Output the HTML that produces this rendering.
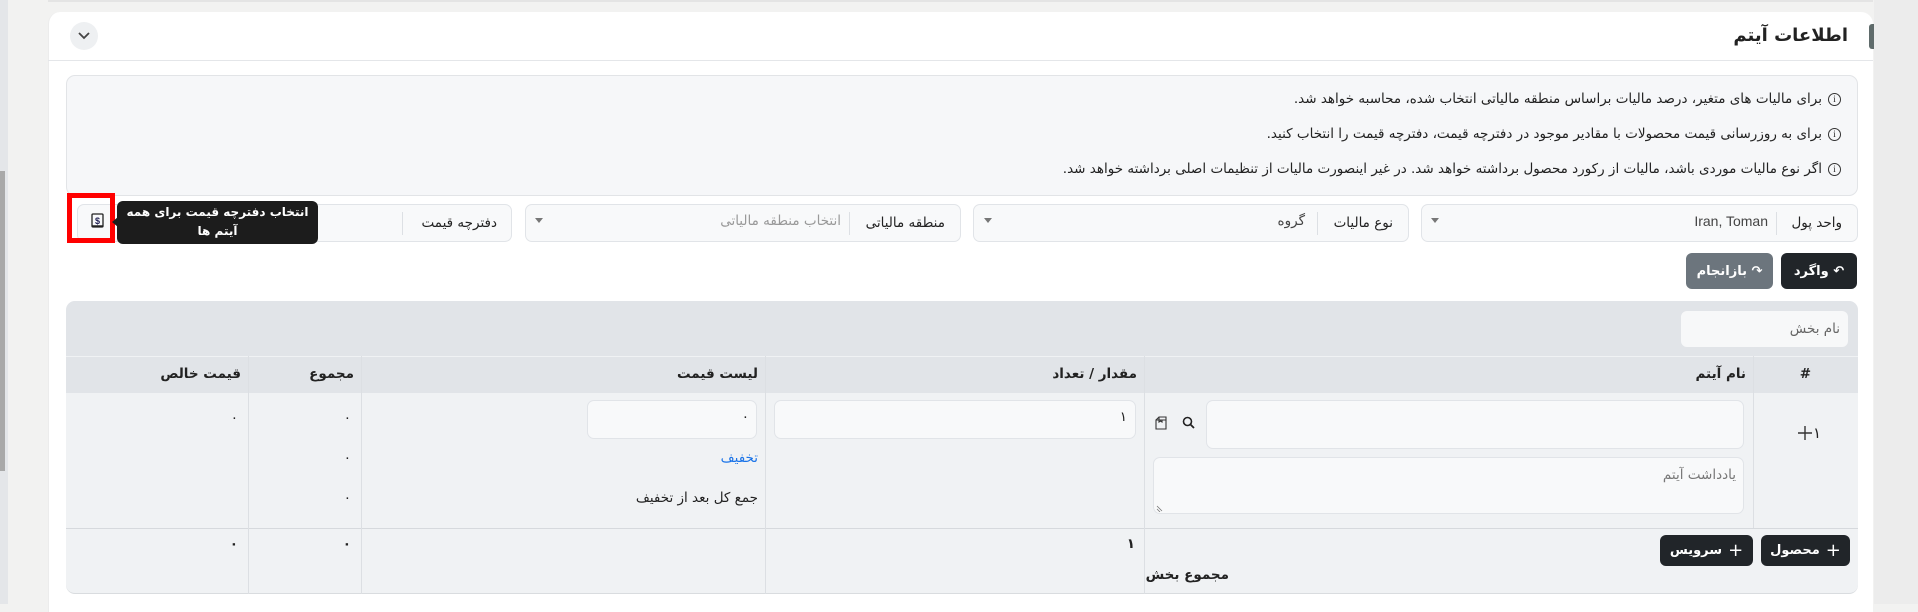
<!DOCTYPE html>
<html><head><meta charset="utf-8"><style>
*{box-sizing:border-box;margin:0;padding:0}
body{width:1918px;height:604px;background:#f2f2f1;font-family:"DejaVu Sans","Liberation Sans",sans-serif;font-size:13.5px;color:#222;position:relative;overflow:hidden}
.a{position:absolute}
.t{position:absolute;direction:rtl;white-space:nowrap}
.inp{position:absolute;background:#f8f9fa;border:1px solid #e1e4e8;border-radius:7px}
.caret{position:absolute;width:0;height:0;border-left:4px solid transparent;border-right:4px solid transparent;border-top:5px solid #777}
.div{position:absolute;width:1px;background:#dde0e4}
.btn{position:absolute;background:#212529;color:#fff;border-radius:6px;direction:rtl;font-weight:bold;font-size:13px;display:flex;align-items:center;justify-content:center;gap:6px}
.vl{position:absolute;width:1px;background:#dcdfe3}
.hl{position:absolute;height:1px;background:#d6d9dd}
.i{display:inline-block;width:13px;height:13px;border:1px solid #333;border-radius:50%;font-size:9px;line-height:11px;text-align:center;vertical-align:1px;margin-left:6px;font-family:"Liberation Serif",serif}
</style></head><body>
<div class="a" style="left:0;top:0;width:8px;height:604px;background:#e4e6e9"></div>
<div class="a" style="left:0;top:171px;width:5px;height:300px;background:#a9a9a9"></div>
<div class="a" style="left:48px;top:0;width:1825px;height:2px;background:#e4e4e4"></div>
<div class="a" style="left:1874px;top:0;width:44px;height:604px;background:#ececec"></div>
<div class="a" style="left:48px;top:12px;width:1825px;height:600px;background:#fff;border-radius:12px 12px 0 0;border-left:1px solid #ececec"></div>
<div class="a" style="left:1869px;top:24px;width:5px;height:25px;background:#5f6b6b;border-radius:3px 0 0 3px"></div>
<div class="t" style="right:70px;top:25px;font-size:18px;font-weight:bold;color:#222">اطلاعات آیتم</div>
<div class="a" style="left:70px;top:22px;width:28px;height:28px;border-radius:50%;background:#eef0f2"></div>
<svg class="a" style="left:77px;top:30px" width="14" height="12" viewBox="0 0 14 12"><path d="M2 3l5 5 5-5" fill="none" stroke="#444" stroke-width="1.8"/></svg>
<div class="a" style="left:48px;top:60px;width:1825px;height:1px;background:#e4e6e9"></div>
<div class="a" style="left:66px;top:75px;width:1792px;height:121px;background:#f6f7f9;border:1px solid #e2e4e7;border-radius:9px"></div>
<div class="t" style="right:77px;top:91px"><span class="i">i</span>برای مالیات های متغیر، درصد مالیات براساس منطقه مالیاتی انتخاب شده، محاسبه خواهد شد.</div>
<div class="t" style="right:77px;top:126px"><span class="i">i</span>برای به روزرسانی قیمت محصولات با مقادیر موجود در دفترچه قیمت، دفترچه قیمت را انتخاب کنید.</div>
<div class="t" style="right:77px;top:161px"><span class="i">i</span>اگر نوع مالیات موردی باشد، مالیات از رکورد محصول برداشته خواهد شد. در غیر اینصورت مالیات از تنظیمات اصلی برداشته خواهد شد.</div>
<div class="inp" style="left:1421px;top:204px;width:437px;height:38px"></div>
<div class="t" style="right:76px;top:215px">واحد پول</div>
<div class="div" style="left:1776px;top:212px;height:23px"></div>
<div class="t" style="right:150px;top:213px;font-family:'Liberation Sans';font-size:14px;color:#444">Iran, Toman</div>
<div class="caret" style="left:1431px;top:218px"></div>
<div class="inp" style="left:973px;top:204px;width:436px;height:38px"></div>
<div class="t" style="right:525px;top:215px">نوع مالیات</div>
<div class="div" style="left:1317px;top:212px;height:23px"></div>
<div class="t" style="right:613px;top:213px;color:#444">گروه</div>
<div class="caret" style="left:984px;top:218px"></div>
<div class="inp" style="left:525px;top:204px;width:436px;height:38px"></div>
<div class="t" style="right:973px;top:215px">منطقه مالیاتی</div>
<div class="div" style="left:849px;top:212px;height:23px"></div>
<div class="t" style="right:1077px;top:213px;color:#999">انتخاب منطقه مالیاتی</div>
<div class="caret" style="left:535px;top:218px"></div>
<div class="inp" style="left:77px;top:204px;width:435px;height:38px"></div>
<div class="t" style="right:1421px;top:215px">دفترچه قیمت</div>
<div class="div" style="left:402px;top:212px;height:23px"></div>
<div class="a" style="left:67px;top:193px;width:48px;height:50px;border:5px solid #f00"></div>
<svg class="a" style="left:91px;top:213px" width="13" height="16" viewBox="0 0 13 16"><rect x="1" y="1" width="11" height="13" rx="1" fill="none" stroke="#222" stroke-width="1.3"/><line x1="1" y1="13" x2="12" y2="13" stroke="#222" stroke-width="1.5"/><text x="6.5" y="11" font-size="9" text-anchor="middle" fill="#225" font-family="Liberation Sans" font-weight="bold">$</text></svg>
<div class="a" style="left:117px;top:201px;width:201px;height:43px;background:#1c1c1c;border-radius:6px"></div>
<div class="a" style="left:112px;top:217px;width:0;height:0;border-top:5px solid transparent;border-bottom:5px solid transparent;border-right:6px solid #1c1c1c"></div>
<div class="a" style="left:117px;top:203px;width:201px;direction:rtl;text-align:center;color:#fff;font-size:12px;font-weight:bold;line-height:19px">انتخاب دفترچه قیمت برای همه<br>آیتم ها</div>
<div class="btn" style="left:1781px;top:253px;width:76px;height:36px">↶ واگرد</div>
<div class="btn" style="left:1686px;top:253px;width:87px;height:36px;background:#6c757d">↷ بازانجام</div>
<div class="a" style="left:66px;top:301px;width:1792px;height:293px;background:#f0f2f4;border-radius:9px;overflow:hidden;border-bottom:1px solid #d9dcdf">
 <div class="a" style="left:0;top:0;width:1792px;height:92px;background:#e1e4e8"></div>
</div>
<div class="inp" style="left:1680px;top:310px;width:169px;height:38px;background:#f7f8f9"></div>
<div class="t" style="right:78px;top:321px;color:#666">نام بخش</div>
<div class="hl" style="left:66px;top:356px;width:1792px;background:#f0f2f4"></div>
<div class="hl" style="left:66px;top:528px;width:1792px"></div>
<div class="vl" style="left:248px;top:356px;height:238px"></div>
<div class="vl" style="left:361px;top:356px;height:238px"></div>
<div class="vl" style="left:765px;top:356px;height:238px"></div>
<div class="vl" style="left:1144px;top:356px;height:238px"></div>
<div class="vl" style="left:1753px;top:356px;height:172px"></div>
<div class="t" style="right:1677px;top:366px;font-weight:bold">قیمت خالص</div>
<div class="t" style="right:1564px;top:366px;font-weight:bold">مجموع</div>
<div class="t" style="right:1160px;top:366px;font-weight:bold">لیست قیمت</div>
<div class="t" style="right:781px;top:366px;font-weight:bold">مقدار / تعداد</div>
<div class="t" style="right:172px;top:366px;font-weight:bold">نام آیتم</div>
<div class="t" style="right:107px;top:366px;font-weight:bold">#</div>
<div class="t" style="right:97px;top:424px;font-size:15px">۱</div>
<svg class="a" style="left:1797px;top:425px" width="16" height="16"><path d="M8 1v14M1 8h14" stroke="#333" stroke-width="1.4"/></svg>
<div class="inp" style="left:1206px;top:400px;width:538px;height:49px"></div>
<div class="inp" style="left:1153px;top:457px;width:591px;height:57px"></div>
<div class="t" style="right:182px;top:467px;color:#777">یادداشت آیتم</div>
<svg class="a" style="left:1156px;top:505px" width="7" height="7"><path d="M1 1l5 5M1 4l3 3" stroke="#777" stroke-width=".8"/></svg>
<svg class="a" style="left:1182px;top:416px" width="13" height="14"><circle cx="5.5" cy="5.5" r="4" fill="none" stroke="#222" stroke-width="1.6"/><path d="M8.5 8.5l3.5 3.5" stroke="#222" stroke-width="1.8"/></svg>
<svg class="a" style="left:1154px;top:416px" width="14" height="14"><path d="M2 4h10v9H2zM2 4l3-3h7l-0 3M5 1v5l1.5-1 1.5 1V4" fill="none" stroke="#333" stroke-width="1.1"/></svg>
<div class="inp" style="left:774px;top:400px;width:362px;height:39px"></div>
<div class="t" style="right:791px;top:409px">۱</div>
<div class="inp" style="left:587px;top:400px;width:170px;height:39px"></div>
<div class="t" style="right:1169px;top:409px">۰</div>
<div class="t" style="right:1160px;top:450px;color:#1a73e8">تخفیف</div>
<div class="t" style="right:1160px;top:490px">جمع کل بعد از تخفیف</div>
<div class="t" style="right:1567px;top:410px">۰</div>
<div class="t" style="right:1567px;top:450px">۰</div>
<div class="t" style="right:1567px;top:490px">۰</div>
<div class="t" style="right:1680px;top:410px">۰</div>
<div class="t" style="right:1680px;top:536px;font-weight:bold">۰</div>
<div class="t" style="right:1567px;top:536px;font-weight:bold">۰</div>
<div class="t" style="right:783px;top:536px;font-weight:bold">۱</div>
<div class="btn" style="left:1761px;top:535px;width:89px;height:31px"><span style="font-size:18px;font-weight:normal">+</span> محصول</div>
<div class="btn" style="left:1660px;top:535px;width:93px;height:31px"><span style="font-size:18px;font-weight:normal">+</span> سرویس</div>
<div class="t" style="right:689px;top:567px;font-weight:bold">مجموع بخش</div>
</body></html>
